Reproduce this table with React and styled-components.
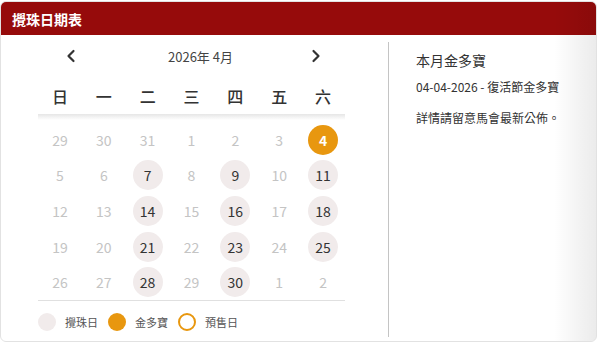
import React from 'react'
import styled, { createGlobalStyle } from 'styled-components'

const GlobalStyle = createGlobalStyle`
  body {
    margin: 0;
    background: #fff;
    font-family: "Noto Sans CJK TC", "Noto Sans", sans-serif;
  }
`

const Card = styled.div`
  position: relative;
  margin: 1px 3px 0 0;
  height: 341px;
  border: 1px solid #e2e2e2;
  border-radius: 6px;
  overflow: hidden;
  box-sizing: border-box;
  display: flex;
  flex-direction: column;
  &::after {
    content: "";
    position: absolute;
    top: 0;
    right: 0;
    bottom: 0;
    width: 42px;
    background: linear-gradient(to right, rgba(0,0,0,0), rgba(0,0,0,0.08));
    pointer-events: none;
  }
`

const Header = styled.div`
  height: 33px;
  background: #960b0b;
  color: #fff;
  font-size: 14px;
  font-weight: 700;
  display: flex;
  align-items: center;
  padding-left: 11px;
  flex-shrink: 0;
`

const Body = styled.div`
  flex: 1;
  display: flex;
  padding: 7px 0 4px 37px;
`

const CalendarCol = styled.div`
  width: 307px;
  display: flex;
  flex-direction: column;
`

const Nav = styled.div`
  height: 28px;
  display: flex;
  align-items: center;
  justify-content: space-between;
  padding: 0 22px 0 26px;
  color: #333;
`

const Arrow = styled.svg`
  width: 14px;
  height: 14px;
`

const Title = styled.div`
  font-size: 13px;
  color: #444;
  margin-left: 14px;
`

const WeekRow = styled.div`
  display: grid;
  grid-template-columns: repeat(7, 1fr);
  height: 36px;
  margin-top: 8px;
  align-items: center;
  text-align: center;
  font-size: 16px;
  font-weight: 500;
  color: #333;
`

const Fade = styled.div`
  height: 6px;
  background: linear-gradient(#e6e6e6, #fff);
`

const Days = styled.div`
  display: grid;
  grid-template-columns: repeat(7, 1fr);
  grid-auto-rows: 35.6px;
  padding-top: 2px;
  border-bottom: 1px solid #e0e0e0;
`

const DayCell = styled.div`
  display: flex;
  align-items: center;
  justify-content: center;
`

const Day = styled.div`
  width: 30px;
  height: 30px;
  border-radius: 50%;
  display: flex;
  align-items: center;
  justify-content: center;
  font-size: 14px;
  font-weight: ${p => (p.$kind === 'gold' ? 700 : 400)};
  color: ${p => (p.$kind === 'gold' ? '#fff' : p.$kind === 'draw' ? '#333' : '#c4c4c4')};
  background: ${p => (p.$kind === 'gold' ? '#e8970f' : p.$kind === 'draw' ? '#f1ebeb' : 'transparent')};
`

const Legend = styled.div`
  display: flex;
  align-items: center;
  padding-top: 12px;
  font-size: 11px;
  color: #555;
`

const Dot = styled.span`
  width: 18px;
  height: 18px;
  border-radius: 50%;
  box-sizing: border-box;
  margin-right: 9px;
  background: ${p => (p.$kind === 'gold' ? '#e8970f' : p.$kind === 'draw' ? '#f1ebeb' : '#fff')};
  border: ${p => (p.$kind === 'presale' ? '2px solid #e8970f' : 'none')};
`

const LegendItem = styled.span`
  display: flex;
  align-items: center;
  margin-right: 10px;
`

const Divider = styled.div`
  width: 1px;
  background: #c4c4c4;
  margin-left: 43px;
`

const Info = styled.div`
  padding: 8px 0 0 27px;
  color: #333;
`

const InfoTitle = styled.div`
  font-size: 14px;
  margin-bottom: 8px;
`

const InfoLine = styled.div`
  font-size: 12px;
  margin-bottom: ${p => p.$gap || 0}px;
`

const weekdays = ['日', '一', '二', '三', '四', '五', '六']

const draws = [7, 9, 11, 14, 16, 18, 21, 23, 25, 28, 30]

const cells = [
  ...[29, 30, 31].map(d => ({ d, kind: 'off' })),
  ...Array.from({ length: 30 }, (_, i) => {
    const d = i + 1
    return { d, kind: d === 4 ? 'gold' : draws.includes(d) ? 'draw' : 'off' }
  }),
  ...[1, 2].map(d => ({ d, kind: 'off' })),
]

export default function App() {
  return (
    <>
      <GlobalStyle />
      <Card>
        <Header>攪珠日期表</Header>
        <Body>
          <CalendarCol>
            <Nav>
              <Arrow viewBox="0 0 14 14">
                <path d="M9.5 2 L4.5 7 L9.5 12" fill="none" stroke="#333" strokeWidth="2.2" strokeLinecap="round" strokeLinejoin="round" />
              </Arrow>
              <Title>2026年 4月</Title>
              <Arrow viewBox="0 0 14 14">
                <path d="M4.5 2 L9.5 7 L4.5 12" fill="none" stroke="#333" strokeWidth="2.2" strokeLinecap="round" strokeLinejoin="round" />
              </Arrow>
            </Nav>
            <WeekRow>
              {weekdays.map(w => <div key={w}>{w}</div>)}
            </WeekRow>
            <Fade />
            <Days>
              {cells.map((c, i) => (
                <DayCell key={i}>
                  <Day $kind={c.kind}>{c.d}</Day>
                </DayCell>
              ))}
            </Days>
            <Legend>
              <LegendItem><Dot $kind="draw" />攪珠日</LegendItem>
              <LegendItem><Dot $kind="gold" />金多寶</LegendItem>
              <LegendItem><Dot $kind="presale" />預售日</LegendItem>
            </Legend>
          </CalendarCol>
          <Divider />
          <Info>
            <InfoTitle>本月金多寶</InfoTitle>
            <InfoLine $gap={14}>04-04-2026 - 復活節金多寶</InfoLine>
            <InfoLine>詳情請留意馬會最新公佈。</InfoLine>
          </Info>
        </Body>
      </Card>
    </>
  )
}
